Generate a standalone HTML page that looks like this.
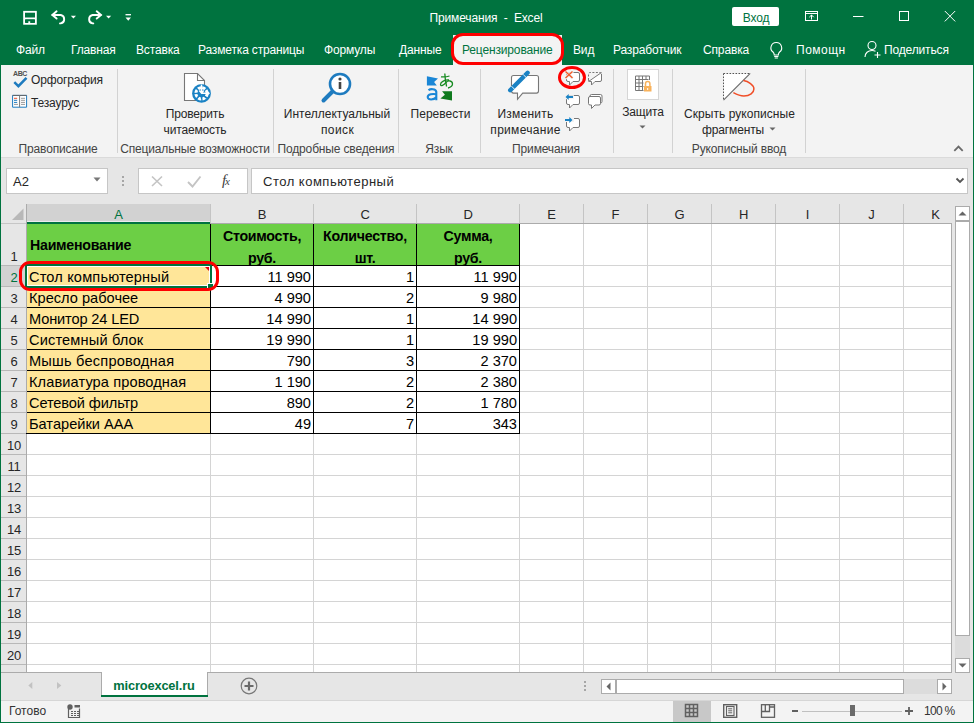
<!DOCTYPE html><html><head><meta charset="utf-8"><style>
html,body{margin:0;padding:0;width:974px;height:723px;overflow:hidden;background:#e6e6e6;}
body{position:relative;font-family:"Liberation Sans",sans-serif;}
.t{position:absolute;white-space:pre;line-height:1;letter-spacing:-0.15px}
</style></head><body>
<div style="position:absolute;left:0px;top:0px;width:974px;height:65px;background:#00733f"></div>
<svg style="position:absolute;left:10px;top:0px" width="130" height="35" viewBox="0 0 130 35"><g fill="none" stroke="#fff" stroke-width="1.8"><rect x="14.1" y="11.8" width="11.8" height="12"/><path d="M15 18.4h10"/></g><rect x="16" y="19.6" width="8" height="3.3" fill="#00733f"/><rect x="18.3" y="21.3" width="1.9" height="2" fill="#fff"/><g fill="none" stroke="#fff" stroke-width="1.9" stroke-linecap="round"><path d="M46.6 11.3L42.3 15l4.3 3.6"/><path d="M42.6 15h8.2a4.3 4.3 0 0 1 0 8.4h-0.8"/></g><path d="M60.8 15.8h5.2l-2.6 2.8z" fill="#fff"/><g fill="none" stroke="#fff" stroke-width="1.9" stroke-linecap="round"><path d="M86.7 11.3L91 15l-4.3 3.6"/><path d="M90.7 15h-8.2a4.3 4.3 0 0 0 0 8.4h0.8"/></g><path d="M96 15.8h5.2l-2.6 2.8z" fill="#fff"/><path d="M115.5 14.7h5.5" stroke="#fff" stroke-width="1.3"/><path d="M115.5 17.5h5.5l-2.75 3.2z" fill="#fff"/></svg>
<div class="t" style="left:286px;width:400px;text-align:center;top:12px;font-size:12px;color:#fff;font-weight:400;">Примечания  -  Excel</div>
<div style="position:absolute;left:732px;top:7px;width:47px;height:19px;background:#fff;border-radius:2px"></div>
<div class="t" style="left:556px;width:400px;text-align:center;top:12px;font-size:12px;color:#00733f;font-weight:400;">Вход</div>
<svg style="position:absolute;left:800px;top:0px" width="174" height="35" viewBox="0 0 174 35"><g fill="none" stroke="#fff" stroke-width="1"><rect x="5.5" y="11.5" width="12" height="9"/><path d="M5.5 13.5h12"/><path d="M11.5 19.5v-4.5M9.3 17.2l2.2-2.2 2.2 2.2"/><path d="M53 16.5h10.5"/><rect x="99.5" y="11.5" width="9" height="9"/><path d="M144.8 11l10.4 10.4M155.2 11l-10.4 10.4"/></g></svg>
<div class="t" style="left:16px;top:44px;font-size:12px;color:#fff;font-weight:400;">Файл</div>
<div class="t" style="left:71px;top:44px;font-size:12px;color:#fff;font-weight:400;">Главная</div>
<div class="t" style="left:136px;top:44px;font-size:12px;color:#fff;font-weight:400;">Вставка</div>
<div class="t" style="left:198px;top:44px;font-size:12px;color:#fff;font-weight:400;">Разметка страницы</div>
<div class="t" style="left:324px;top:44px;font-size:12px;color:#fff;font-weight:400;">Формулы</div>
<div class="t" style="left:399px;top:44px;font-size:12px;color:#fff;font-weight:400;">Данные</div>
<div class="t" style="left:573px;top:44px;font-size:12px;color:#fff;font-weight:400;">Вид</div>
<div class="t" style="left:613px;top:44px;font-size:12px;color:#fff;font-weight:400;">Разработчик</div>
<div class="t" style="left:703px;top:44px;font-size:12px;color:#fff;font-weight:400;">Справка</div>
<div style="position:absolute;left:453px;top:35px;width:109px;height:30px;background:#f3f3f3"></div>
<div class="t" style="left:462px;top:44px;font-size:12px;color:#00733f;font-weight:400;">Рецензирование</div>
<svg style="position:absolute;left:766px;top:38px" width="20" height="22" viewBox="0 0 20 22"><g fill="none" stroke="#fff" stroke-width="1.1"><path d="M10.3 4.5a5.3 5.3 0 0 0-3.3 9.5c.8.8 1.2 1.5 1.2 2.5v0.5h4.2v-0.5c0-1 .4-1.7 1.2-2.5a5.3 5.3 0 0 0-3.3-9.5z"/><path d="M8.2 18.5h4.2M8.7 20h3.2"/></g></svg>
<div class="t" style="left:796px;top:44px;font-size:12px;color:#fff;font-weight:400;letter-spacing:0.5px">Помощн</div>
<svg style="position:absolute;left:862px;top:38px" width="22" height="22" viewBox="0 0 22 22"><g fill="none" stroke="#fff" stroke-width="1.1"><circle cx="10" cy="7.5" r="4"/><path d="M3 19c0-4 3-6.5 7-6.5 1.5 0 2.5.3 3.5.8"/><path d="M15.5 14v6M12.5 17h6"/></g></svg>
<div class="t" style="left:884px;top:44px;font-size:12px;color:#fff;font-weight:400;">Поделиться</div>
<div style="position:absolute;left:451px;top:33px;width:113px;height:32px;border:3px solid #fe0000;border-radius:12px;box-sizing:border-box"></div>
<div style="position:absolute;left:1px;top:65px;width:972px;height:92px;background:#f3f3f3"></div>
<div style="position:absolute;left:1px;top:157px;width:972px;height:1px;background:#dadada"></div>
<div style="position:absolute;left:117px;top:69px;width:1px;height:84px;background:#d2d2d2"></div>
<div style="position:absolute;left:273px;top:69px;width:1px;height:84px;background:#d2d2d2"></div>
<div style="position:absolute;left:398px;top:69px;width:1px;height:84px;background:#d2d2d2"></div>
<div style="position:absolute;left:480px;top:69px;width:1px;height:84px;background:#d2d2d2"></div>
<div style="position:absolute;left:613px;top:69px;width:1px;height:84px;background:#d2d2d2"></div>
<div style="position:absolute;left:672px;top:69px;width:1px;height:84px;background:#d2d2d2"></div>
<div style="position:absolute;left:805px;top:69px;width:1px;height:84px;background:#d2d2d2"></div>
<div class="t" style="left:-142px;width:400px;text-align:center;top:143px;font-size:12px;color:#444;font-weight:400;">Правописание</div>
<div class="t" style="left:-5px;width:400px;text-align:center;top:143px;font-size:12px;color:#444;font-weight:400;">Специальные возможности</div>
<div class="t" style="left:136px;width:400px;text-align:center;top:143px;font-size:12px;color:#444;font-weight:400;">Подробные сведения</div>
<div class="t" style="left:239px;width:400px;text-align:center;top:143px;font-size:12px;color:#444;font-weight:400;">Язык</div>
<div class="t" style="left:346px;width:400px;text-align:center;top:143px;font-size:12px;color:#444;font-weight:400;">Примечания</div>
<div class="t" style="left:539px;width:400px;text-align:center;top:143px;font-size:12px;color:#444;font-weight:400;">Рукописный ввод</div>
<svg style="position:absolute;left:5px;top:66px" width="40" height="45" viewBox="0 0 40 45"><text x="8" y="10.2" font-family="Liberation Sans" font-size="7" font-weight="700" fill="#505050" letter-spacing="-0.4">ABC</text><path d="M9.3 16.2l4.1 4 8.1-8.4" fill="none" stroke="#1e7bbf" stroke-width="2.5"/><path d="M7.6 41.2v-11.8h14v11.8z" fill="#fff" stroke="#1e7bbf" stroke-width="1"/><path d="M7.6 29.4h14" stroke="#666" stroke-width="1"/><path d="M14.6 29.4v11.8" stroke="#777" stroke-width="1"/><path d="M9 32.3h3.2" stroke="#f04e28"/><path d="M9 34.3h3.2M9 36.4h3.2" stroke="#1e7bbf"/><path d="M9 38.4h4M16 32.3h4M16 34.3h4M16 36.4h4M16 38.4h4" stroke="#9a9a9a"/></svg>
<div class="t" style="left:31px;top:74px;font-size:12px;color:#262626;font-weight:400;">Орфография</div>
<div class="t" style="left:31px;top:97px;font-size:12px;color:#262626;font-weight:400;">Тезаурус</div>
<svg style="position:absolute;left:175px;top:66px" width="50" height="40" viewBox="0 0 50 40"><path d="M9.5 7.5h13l7 7v20h-20z" fill="#fff" stroke="#777" stroke-width="1.1"/><path d="M22.5 7.5v7h7" fill="none" stroke="#777" stroke-width="1.1"/><circle cx="26.5" cy="27.4" r="9.4" fill="#1a82c4"/><circle cx="26.5" cy="27.4" r="5.6" fill="none" stroke="#fff" stroke-width="3" stroke-dasharray="3.2 1.2"/><path d="M26.5 27.4L22 23M26.5 27.4L22 32M26.5 27.4L31 32M26.5 27.4v5.8M20.8 27.4h5.7" stroke="#1a82c4" stroke-width="1.2"/><path d="M26.5 18.5v8.5M24.3 24.5l2.2 2.5 2.2-2.5M26.5 27.2h7M31.5 25l2.4 2.2-2.4 2.2" fill="none" stroke="#fff" stroke-width="1.5"/></svg>
<div class="t" style="left:-5px;width:400px;text-align:center;top:108px;font-size:12px;color:#262626;font-weight:400;">Проверить</div>
<div class="t" style="left:-5px;width:400px;text-align:center;top:124px;font-size:12px;color:#262626;font-weight:400;">читаемость</div>
<svg style="position:absolute;left:318px;top:70px" width="36" height="34" viewBox="0 0 36 34"><circle cx="22" cy="14" r="10" fill="#fff" stroke="#1e7bbf" stroke-width="2.6"/><path d="M14.5 21.5l-9 9" stroke="#1e7bbf" stroke-width="4" stroke-linecap="round"/><circle cx="22" cy="9" r="1.6" fill="#444"/><path d="M22 12v7" stroke="#444" stroke-width="2.6"/></svg>
<div class="t" style="left:137px;width:400px;text-align:center;top:108px;font-size:12px;color:#262626;font-weight:400;letter-spacing:0px">Интеллектуальный</div>
<div class="t" style="left:137.5px;width:400px;text-align:center;top:124px;font-size:12px;color:#262626;font-weight:400;letter-spacing:0.4px">поиск</div>
<svg style="position:absolute;left:415px;top:66px" width="50" height="40" viewBox="0 0 50 40"><path d="M11.9 10.2L23 12.4 19.1 16 21.8 19.6H11.9z" fill="#1a86d6"/><path d="M37 25.2V34.6L25.4 32.4 29.9 28.8 27.1 25.2z" fill="#0f7a1e"/><g fill="none" stroke="#168a20" stroke-width="1.3"><path d="M26 10.8c3 0.4 6 0 8.5-0.8"/><path d="M29.8 7.5c0.2 4 0.6 8 1.8 13"/><path d="M34 14c-4-0.5-8.5 2-8.5 4.5 0 2.5 3.5 0.5 5.5-2 2-2.5 6.5-2 6.5 1.5 0 2.5-2.5 3.5-4.5 4"/></g><g fill="none" stroke="#1a86d6" stroke-width="2.1"><path d="M13.5 24.3c1.8-1.6 7.2-1.8 7.8 1.5v8.5"/><path d="M21.3 28.2c-3.5-0.5-8.6-0.2-8.6 2.9 0 3.3 6.2 3 8.6 0.2"/></g></svg>
<div class="t" style="left:240.5px;width:400px;text-align:center;top:108px;font-size:12px;color:#262626;font-weight:400;letter-spacing:0px">Перевести</div>
<svg style="position:absolute;left:495px;top:66px" width="60" height="40" viewBox="0 0 60 40"><path d="M18.5 9.5h23a2 2 0 0 1 2 2v13.6a2 2 0 0 1-2 2h-13.8l-5.2 6.2v-6.2h-4a2 2 0 0 1-2-2v-13.6a2 2 0 0 1 2-2z" fill="#fff" stroke="#777" stroke-width="1.1"/><path d="M15.2 24.2L32.6 6.8" stroke="#1a82c4" stroke-width="4.4" stroke-linecap="round"/><path d="M16.5 20.2l3.4 3.4M28.2 8.5l3.4 3.4" stroke="#fff" stroke-width="0.9"/></svg>
<div class="t" style="left:325.5px;width:400px;text-align:center;top:108px;font-size:12px;color:#262626;font-weight:400;letter-spacing:0.25px">Изменить</div>
<div class="t" style="left:325.5px;width:400px;text-align:center;top:124px;font-size:12px;color:#262626;font-weight:400;letter-spacing:0.3px">примечание</div>
<svg style="position:absolute;left:550px;top:62px" width="70" height="70" viewBox="0 0 70 70"><path d="M18.0 10.5h10a1.5 1.5 0 0 1 1.5 1.5v6a1.5 1.5 0 0 1-1.5 1.5h-5.0l-3.5 3.5v-3.5h-1.5a1.5 1.5 0 0 1-1.5-1.5v-6a1.5 1.5 0 0 1 1.5-1.5z" fill="#fff" stroke="#777" stroke-width="1"/><path d="M15.2 9.2l7.6 7.2M22.8 9.2l-7.6 7.2" stroke="#f3f3f3" stroke-width="3"/><path d="M15.5 9.5l7 6.5M22.5 9.5l-7 6.5" stroke="#f05a28" stroke-width="1.4"/><path d="M51.5 12v6a1.5 1.5 0 0 1-1.5 1.5h-5l-3.5 3.5v-3.5h-1.5a1.5 1.5 0 0 1-1.5-1.5" fill="#fff" stroke="#777"/><path d="M38.5 18v-6a1.5 1.5 0 0 1 1.5-1.5h10a1.5 1.5 0 0 1 1.5 1.5" fill="none" stroke="#777" stroke-dasharray="2 1.5"/><path d="M38.5 19.5L51.5 10.5" stroke="#777"/><path d="M18.0 33.5h10a1.5 1.5 0 0 1 1.5 1.5v6a1.5 1.5 0 0 1-1.5 1.5h-5.0l-3.5 3.5v-3.5h-1.5a1.5 1.5 0 0 1-1.5-1.5v-6a1.5 1.5 0 0 1 1.5-1.5z" fill="#fff" stroke="#777" stroke-width="1"/><path d="M15 35.2h9" stroke="#f3f3f3" stroke-width="4"/><path d="M17 35h6" stroke="#1a82c4" stroke-width="2"/><path d="M15.5 35l3.2-3v6z" fill="#1a82c4"/><path d="M41.5 32.5h9a1.5 1.5 0 0 1 1.5 1.5v5.5a1.5 1.5 0 0 1-1.5 1.5h-4.0l-3.5 3.5v-3.5h-1.5a1.5 1.5 0 0 1-1.5-1.5v-5.5a1.5 1.5 0 0 1 1.5-1.5z" fill="#fff" stroke="#777" stroke-width="1"/><path d="M40.0 34.5h9a1.5 1.5 0 0 1 1.5 1.5v5.5a1.5 1.5 0 0 1-1.5 1.5h-4.0l-3.5 3.5v-3.5h-1.5a1.5 1.5 0 0 1-1.5-1.5v-5.5a1.5 1.5 0 0 1 1.5-1.5z" fill="#fff" stroke="#777" stroke-width="1"/><path d="M18.0 56.5h10a1.5 1.5 0 0 1 1.5 1.5v6a1.5 1.5 0 0 1-1.5 1.5h-5.0l-3.5 3.5v-3.5h-1.5a1.5 1.5 0 0 1-1.5-1.5v-6a1.5 1.5 0 0 1 1.5-1.5z" fill="#fff" stroke="#777" stroke-width="1"/><path d="M14 58h10" stroke="#f3f3f3" stroke-width="4"/><path d="M15 58h5" stroke="#1a82c4" stroke-width="2"/><path d="M22.5 58l-3.2-3v6z" fill="#1a82c4"/></svg>
<div style="position:absolute;left:558px;top:66px;width:28px;height:23px;border:3px solid #fe0000;border-radius:50%;box-sizing:border-box"></div>
<div style="position:absolute;left:627px;top:69px;width:32px;height:31px;background:#fff;border:1px solid #d6d6d6;box-sizing:border-box"></div>
<svg style="position:absolute;left:630px;top:72px" width="26" height="26" viewBox="0 0 26 26"><g stroke="#777" fill="none"><path d="M5.5 18.5v-14.5h14v4"/><path d="M5.5 7.5h13M5.5 11h8M5.5 14.5h8M9 4v15M12.5 4v15M16 4v4"/><path d="M5.5 18.5h8"/></g><rect x="14" y="14" width="7.5" height="5.5" fill="#f8b25c"/><path d="M15.5 14v-2.2a2.2 2.2 0 0 1 4.4 0v2.2" fill="none" stroke="#f8b25c" stroke-width="1.5"/><path d="M17.7 16v2" stroke="#fff" stroke-width="1"/></svg>
<div class="t" style="left:443px;width:400px;text-align:center;top:106px;font-size:12px;color:#262626;font-weight:400;">Защита</div>
<svg style="position:absolute;left:638px;top:123px" width="10" height="8" viewBox="0 0 10 8"><path d="M1.5 2.5h6l-3 3z" fill="#666"/></svg>
<svg style="position:absolute;left:710px;top:62px" width="70" height="45" viewBox="0 0 70 45"><path d="M13.5 11.5h26.5L13.5 38z" fill="#fff"/><path d="M13.5 11.5h26.5" stroke="#555" stroke-dasharray="1.6 1.4"/><path d="M13.5 11.5v26.5" stroke="#555" stroke-dasharray="1.6 1.4"/><path d="M13.5 38.2L40.2 11.3" stroke="#666" stroke-width="1.1"/><path d="M33.4 18.6c5 0.8 10.5 4.5 10.5 8.3 0 3.7-4 7.2-10 7.2-4.2 0-8-2-10.5-3.4" fill="none" stroke="#f04e28" stroke-width="1.5"/></svg>
<div class="t" style="left:539.5px;width:400px;text-align:center;top:108px;font-size:12px;color:#262626;font-weight:400;letter-spacing:0.05px">Скрыть рукописные</div>
<div class="t" style="left:533px;width:400px;text-align:center;top:124px;font-size:12px;color:#262626;font-weight:400;">фрагменты</div>
<svg style="position:absolute;left:769px;top:127px" width="8" height="6" viewBox="0 0 8 6"><path d="M0.5 0.5h6l-3 3z" fill="#666"/></svg>
<svg style="position:absolute;left:950px;top:140px" width="14" height="14" viewBox="0 0 14 14"><path d="M4.3 10.8l4.2-4.2 4.2 4.2" fill="none" stroke="#6a6a6a" stroke-width="1.8"/></svg>
<div style="position:absolute;left:6px;top:168px;width:102px;height:26px;background:#fff;border:1px solid #c6c6c6;box-sizing:border-box"></div>
<div class="t" style="left:13px;top:175px;font-size:13px;color:#262626;font-weight:400;letter-spacing:0.2px">A2</div>
<svg style="position:absolute;left:93px;top:177px" width="10" height="6" viewBox="0 0 10 6"><path d="M0.5 0.5h7l-3.5 4z" fill="#777"/></svg>
<div style="position:absolute;left:122px;top:176px;width:2px;height:2px;background:#a6a6a6"></div>
<div style="position:absolute;left:122px;top:180px;width:2px;height:2px;background:#a6a6a6"></div>
<div style="position:absolute;left:122px;top:184px;width:2px;height:2px;background:#a6a6a6"></div>
<div style="position:absolute;left:138px;top:168px;width:110px;height:26px;background:#fff;border:1px solid #c6c6c6;box-sizing:border-box"></div>
<svg style="position:absolute;left:148px;top:172px" width="18" height="18" viewBox="0 0 18 18"><path d="M4 4.5l10 9.5M14 4.5l-10 9.5" stroke="#c4c4c4" stroke-width="1.6"/></svg>
<svg style="position:absolute;left:184px;top:172px" width="18" height="18" viewBox="0 0 18 18"><path d="M4 10l4.5 4.5 8-10" fill="none" stroke="#c4c4c4" stroke-width="1.9"/></svg>
<div class="t" style="left:222px;top:173px;font-size:15px;color:#404040;font-weight:400;font-family:'Liberation Serif'"><i>f</i><span style='font-size:11px;position:relative;left:-1px'><i>x</i></span></div>
<div style="position:absolute;left:251px;top:168px;width:717px;height:26px;background:#fff;border:1px solid #c6c6c6;box-sizing:border-box"></div>
<div class="t" style="left:263px;top:175px;font-size:13px;color:#262626;font-weight:400;letter-spacing:0.5px">Стол компьютерный</div>
<svg style="position:absolute;left:953px;top:175px" width="14" height="10" viewBox="0 0 14 10"><path d="M3.5 3.5l3.5 3.5 3.5-3.5" fill="none" stroke="#555" stroke-width="1.8"/></svg>
<div style="position:absolute;left:1px;top:204px;width:950px;height:468px;background:#fff"></div>
<div style="position:absolute;left:1px;top:204px;width:950px;height:19px;background:#e6e6e6"></div>
<div style="position:absolute;left:1px;top:223px;width:25px;height:449px;background:#e6e6e6"></div>
<div style="position:absolute;left:27px;top:204px;width:183px;height:19px;background:#d2d2d2"></div>
<div style="position:absolute;left:1px;top:266px;width:25px;height:20px;background:#d2d2d2"></div>
<svg style="position:absolute;left:8px;top:206px" width="18" height="16" viewBox="0 0 18 16"><path d="M15.5 2.5v11.5H4z" fill="#b8b8b8"/></svg>
<div style="position:absolute;left:210px;top:224px;width:1px;height:448px;background:#d4d4d4"></div>
<div style="position:absolute;left:210px;top:204px;width:1px;height:19px;background:#c4c4c4"></div>
<div style="position:absolute;left:313px;top:224px;width:1px;height:448px;background:#d4d4d4"></div>
<div style="position:absolute;left:313px;top:204px;width:1px;height:19px;background:#c4c4c4"></div>
<div style="position:absolute;left:416px;top:224px;width:1px;height:448px;background:#d4d4d4"></div>
<div style="position:absolute;left:416px;top:204px;width:1px;height:19px;background:#c4c4c4"></div>
<div style="position:absolute;left:519px;top:224px;width:1px;height:448px;background:#d4d4d4"></div>
<div style="position:absolute;left:519px;top:204px;width:1px;height:19px;background:#c4c4c4"></div>
<div style="position:absolute;left:583px;top:224px;width:1px;height:448px;background:#d4d4d4"></div>
<div style="position:absolute;left:583px;top:204px;width:1px;height:19px;background:#c4c4c4"></div>
<div style="position:absolute;left:647px;top:224px;width:1px;height:448px;background:#d4d4d4"></div>
<div style="position:absolute;left:647px;top:204px;width:1px;height:19px;background:#c4c4c4"></div>
<div style="position:absolute;left:711px;top:224px;width:1px;height:448px;background:#d4d4d4"></div>
<div style="position:absolute;left:711px;top:204px;width:1px;height:19px;background:#c4c4c4"></div>
<div style="position:absolute;left:775px;top:224px;width:1px;height:448px;background:#d4d4d4"></div>
<div style="position:absolute;left:775px;top:204px;width:1px;height:19px;background:#c4c4c4"></div>
<div style="position:absolute;left:839px;top:224px;width:1px;height:448px;background:#d4d4d4"></div>
<div style="position:absolute;left:839px;top:204px;width:1px;height:19px;background:#c4c4c4"></div>
<div style="position:absolute;left:903px;top:224px;width:1px;height:448px;background:#d4d4d4"></div>
<div style="position:absolute;left:903px;top:204px;width:1px;height:19px;background:#c4c4c4"></div>
<div style="position:absolute;left:26px;top:204px;width:1px;height:468px;background:#ababab"></div>
<div style="position:absolute;left:27px;top:223px;width:924px;height:1px;background:#ababab"></div>
<div style="position:absolute;left:1px;top:223px;width:25px;height:1px;background:#c6c6c6"></div>
<div style="position:absolute;left:27px;top:222px;width:183px;height:2px;background:#00733f"></div>
<div style="position:absolute;left:27px;top:221px;width:183px;height:1px;background:#ececec"></div>
<div style="position:absolute;left:27px;top:265px;width:924px;height:1px;background:#d4d4d4"></div>
<div style="position:absolute;left:1px;top:265px;width:25px;height:1px;background:#b8b8b8"></div>
<div style="position:absolute;left:27px;top:286px;width:924px;height:1px;background:#d4d4d4"></div>
<div style="position:absolute;left:1px;top:286px;width:25px;height:1px;background:#b8b8b8"></div>
<div style="position:absolute;left:27px;top:307px;width:924px;height:1px;background:#d4d4d4"></div>
<div style="position:absolute;left:1px;top:307px;width:25px;height:1px;background:#b8b8b8"></div>
<div style="position:absolute;left:27px;top:328px;width:924px;height:1px;background:#d4d4d4"></div>
<div style="position:absolute;left:1px;top:328px;width:25px;height:1px;background:#b8b8b8"></div>
<div style="position:absolute;left:27px;top:349px;width:924px;height:1px;background:#d4d4d4"></div>
<div style="position:absolute;left:1px;top:349px;width:25px;height:1px;background:#b8b8b8"></div>
<div style="position:absolute;left:27px;top:370px;width:924px;height:1px;background:#d4d4d4"></div>
<div style="position:absolute;left:1px;top:370px;width:25px;height:1px;background:#b8b8b8"></div>
<div style="position:absolute;left:27px;top:391px;width:924px;height:1px;background:#d4d4d4"></div>
<div style="position:absolute;left:1px;top:391px;width:25px;height:1px;background:#b8b8b8"></div>
<div style="position:absolute;left:27px;top:412px;width:924px;height:1px;background:#d4d4d4"></div>
<div style="position:absolute;left:1px;top:412px;width:25px;height:1px;background:#b8b8b8"></div>
<div style="position:absolute;left:27px;top:433px;width:924px;height:1px;background:#d4d4d4"></div>
<div style="position:absolute;left:1px;top:433px;width:25px;height:1px;background:#b8b8b8"></div>
<div style="position:absolute;left:27px;top:454px;width:924px;height:1px;background:#d4d4d4"></div>
<div style="position:absolute;left:1px;top:454px;width:25px;height:1px;background:#b8b8b8"></div>
<div style="position:absolute;left:27px;top:475px;width:924px;height:1px;background:#d4d4d4"></div>
<div style="position:absolute;left:1px;top:475px;width:25px;height:1px;background:#b8b8b8"></div>
<div style="position:absolute;left:27px;top:496px;width:924px;height:1px;background:#d4d4d4"></div>
<div style="position:absolute;left:1px;top:496px;width:25px;height:1px;background:#b8b8b8"></div>
<div style="position:absolute;left:27px;top:517px;width:924px;height:1px;background:#d4d4d4"></div>
<div style="position:absolute;left:1px;top:517px;width:25px;height:1px;background:#b8b8b8"></div>
<div style="position:absolute;left:27px;top:538px;width:924px;height:1px;background:#d4d4d4"></div>
<div style="position:absolute;left:1px;top:538px;width:25px;height:1px;background:#b8b8b8"></div>
<div style="position:absolute;left:27px;top:559px;width:924px;height:1px;background:#d4d4d4"></div>
<div style="position:absolute;left:1px;top:559px;width:25px;height:1px;background:#b8b8b8"></div>
<div style="position:absolute;left:27px;top:580px;width:924px;height:1px;background:#d4d4d4"></div>
<div style="position:absolute;left:1px;top:580px;width:25px;height:1px;background:#b8b8b8"></div>
<div style="position:absolute;left:27px;top:601px;width:924px;height:1px;background:#d4d4d4"></div>
<div style="position:absolute;left:1px;top:601px;width:25px;height:1px;background:#b8b8b8"></div>
<div style="position:absolute;left:27px;top:622px;width:924px;height:1px;background:#d4d4d4"></div>
<div style="position:absolute;left:1px;top:622px;width:25px;height:1px;background:#b8b8b8"></div>
<div style="position:absolute;left:27px;top:643px;width:924px;height:1px;background:#d4d4d4"></div>
<div style="position:absolute;left:1px;top:643px;width:25px;height:1px;background:#b8b8b8"></div>
<div style="position:absolute;left:27px;top:664px;width:924px;height:1px;background:#d4d4d4"></div>
<div style="position:absolute;left:1px;top:664px;width:25px;height:1px;background:#b8b8b8"></div>
<div class="t" style="left:-81.5px;width:400px;text-align:center;top:208px;font-size:13px;color:#00733f;font-weight:400;">A</div>
<div class="t" style="left:62.0px;width:400px;text-align:center;top:208px;font-size:13px;color:#262626;font-weight:400;">B</div>
<div class="t" style="left:165.0px;width:400px;text-align:center;top:208px;font-size:13px;color:#262626;font-weight:400;">C</div>
<div class="t" style="left:268.0px;width:400px;text-align:center;top:208px;font-size:13px;color:#262626;font-weight:400;">D</div>
<div class="t" style="left:351.5px;width:400px;text-align:center;top:208px;font-size:13px;color:#262626;font-weight:400;">E</div>
<div class="t" style="left:415.5px;width:400px;text-align:center;top:208px;font-size:13px;color:#262626;font-weight:400;">F</div>
<div class="t" style="left:479.5px;width:400px;text-align:center;top:208px;font-size:13px;color:#262626;font-weight:400;">G</div>
<div class="t" style="left:543.5px;width:400px;text-align:center;top:208px;font-size:13px;color:#262626;font-weight:400;">H</div>
<div class="t" style="left:607.5px;width:400px;text-align:center;top:208px;font-size:13px;color:#262626;font-weight:400;">I</div>
<div class="t" style="left:671.5px;width:400px;text-align:center;top:208px;font-size:13px;color:#262626;font-weight:400;">J</div>
<div class="t" style="left:735.5px;width:400px;text-align:center;top:208px;font-size:13px;color:#262626;font-weight:400;">K</div>
<div class="t" style="left:-186px;width:400px;text-align:center;top:250px;font-size:13px;color:#262626;font-weight:400;">1</div>
<div class="t" style="left:-186px;width:400px;text-align:center;top:271px;font-size:13px;color:#00733f;font-weight:400;">2</div>
<div class="t" style="left:-186px;width:400px;text-align:center;top:292px;font-size:13px;color:#262626;font-weight:400;">3</div>
<div class="t" style="left:-186px;width:400px;text-align:center;top:313px;font-size:13px;color:#262626;font-weight:400;">4</div>
<div class="t" style="left:-186px;width:400px;text-align:center;top:334px;font-size:13px;color:#262626;font-weight:400;">5</div>
<div class="t" style="left:-186px;width:400px;text-align:center;top:355px;font-size:13px;color:#262626;font-weight:400;">6</div>
<div class="t" style="left:-186px;width:400px;text-align:center;top:376px;font-size:13px;color:#262626;font-weight:400;">7</div>
<div class="t" style="left:-186px;width:400px;text-align:center;top:397px;font-size:13px;color:#262626;font-weight:400;">8</div>
<div class="t" style="left:-186px;width:400px;text-align:center;top:418px;font-size:13px;color:#262626;font-weight:400;">9</div>
<div class="t" style="left:-186px;width:400px;text-align:center;top:439px;font-size:13px;color:#262626;font-weight:400;">10</div>
<div class="t" style="left:-186px;width:400px;text-align:center;top:460px;font-size:13px;color:#262626;font-weight:400;">11</div>
<div class="t" style="left:-186px;width:400px;text-align:center;top:481px;font-size:13px;color:#262626;font-weight:400;">12</div>
<div class="t" style="left:-186px;width:400px;text-align:center;top:502px;font-size:13px;color:#262626;font-weight:400;">13</div>
<div class="t" style="left:-186px;width:400px;text-align:center;top:523px;font-size:13px;color:#262626;font-weight:400;">14</div>
<div class="t" style="left:-186px;width:400px;text-align:center;top:544px;font-size:13px;color:#262626;font-weight:400;">15</div>
<div class="t" style="left:-186px;width:400px;text-align:center;top:565px;font-size:13px;color:#262626;font-weight:400;">16</div>
<div class="t" style="left:-186px;width:400px;text-align:center;top:586px;font-size:13px;color:#262626;font-weight:400;">17</div>
<div class="t" style="left:-186px;width:400px;text-align:center;top:607px;font-size:13px;color:#262626;font-weight:400;">18</div>
<div class="t" style="left:-186px;width:400px;text-align:center;top:628px;font-size:13px;color:#262626;font-weight:400;">19</div>
<div class="t" style="left:-186px;width:400px;text-align:center;top:649px;font-size:13px;color:#262626;font-weight:400;">20</div>
<div style="position:absolute;left:951px;top:223px;width:1px;height:450px;background:#ababab"></div>
<div style="position:absolute;left:1px;top:672px;width:951px;height:1px;background:#ababab"></div>
<div style="position:absolute;left:27px;top:224px;width:183px;height:41px;background:#6ccf45"></div>
<div style="position:absolute;left:211px;top:224px;width:102px;height:41px;background:#6ccf45"></div>
<div style="position:absolute;left:314px;top:224px;width:102px;height:41px;background:#6ccf45"></div>
<div style="position:absolute;left:417px;top:224px;width:102px;height:41px;background:#6ccf45"></div>
<div style="position:absolute;left:27px;top:266px;width:183px;height:20px;background:#ffe699"></div>
<div style="position:absolute;left:27px;top:287px;width:183px;height:20px;background:#ffe699"></div>
<div style="position:absolute;left:27px;top:308px;width:183px;height:20px;background:#ffe699"></div>
<div style="position:absolute;left:27px;top:329px;width:183px;height:20px;background:#ffe699"></div>
<div style="position:absolute;left:27px;top:350px;width:183px;height:20px;background:#ffe699"></div>
<div style="position:absolute;left:27px;top:371px;width:183px;height:20px;background:#ffe699"></div>
<div style="position:absolute;left:27px;top:392px;width:183px;height:20px;background:#ffe699"></div>
<div style="position:absolute;left:27px;top:413px;width:183px;height:20px;background:#ffe699"></div>
<div style="position:absolute;left:210px;top:224px;width:1px;height:210px;background:#000"></div>
<div style="position:absolute;left:313px;top:224px;width:1px;height:210px;background:#000"></div>
<div style="position:absolute;left:416px;top:224px;width:1px;height:210px;background:#000"></div>
<div style="position:absolute;left:519px;top:224px;width:1px;height:210px;background:#000"></div>
<div style="position:absolute;left:27px;top:265px;width:493px;height:1px;background:#000"></div>
<div style="position:absolute;left:27px;top:286px;width:493px;height:1px;background:#000"></div>
<div style="position:absolute;left:27px;top:307px;width:493px;height:1px;background:#000"></div>
<div style="position:absolute;left:27px;top:328px;width:493px;height:1px;background:#000"></div>
<div style="position:absolute;left:27px;top:349px;width:493px;height:1px;background:#000"></div>
<div style="position:absolute;left:27px;top:370px;width:493px;height:1px;background:#000"></div>
<div style="position:absolute;left:27px;top:391px;width:493px;height:1px;background:#000"></div>
<div style="position:absolute;left:27px;top:412px;width:493px;height:1px;background:#000"></div>
<div style="position:absolute;left:27px;top:433px;width:493px;height:1px;background:#000"></div>
<div style="position:absolute;left:26px;top:433px;width:185px;height:1px;background:#000"></div>
<div class="t" style="left:30px;top:238px;font-size:14.2px;color:#000;font-weight:700;letter-spacing:-0.25px">Наименование</div>
<div class="t" style="left:62px;width:400px;text-align:center;top:229px;font-size:14.2px;color:#000;font-weight:700;letter-spacing:-0.25px">Стоимость,</div>
<div class="t" style="left:62px;width:400px;text-align:center;top:251px;font-size:14.2px;color:#000;font-weight:700;letter-spacing:-0.25px">руб.</div>
<div class="t" style="left:165px;width:400px;text-align:center;top:229px;font-size:14.2px;color:#000;font-weight:700;letter-spacing:-0.25px">Количество,</div>
<div class="t" style="left:165px;width:400px;text-align:center;top:251px;font-size:14.2px;color:#000;font-weight:700;letter-spacing:-0.25px">шт.</div>
<div class="t" style="left:268px;width:400px;text-align:center;top:229px;font-size:14.2px;color:#000;font-weight:700;letter-spacing:-0.25px">Сумма,</div>
<div class="t" style="left:268px;width:400px;text-align:center;top:251px;font-size:14.2px;color:#000;font-weight:700;letter-spacing:-0.25px">руб.</div>
<div class="t" style="left:29px;top:270px;font-size:14.6px;color:#000;font-weight:400;letter-spacing:0.15px">Стол компьютерный</div>
<div class="t" style="left:-89px;width:400px;text-align:right;top:270px;font-size:14.6px;color:#000;font-weight:400;letter-spacing:0px">11 990</div>
<div class="t" style="left:14px;width:400px;text-align:right;top:270px;font-size:14.6px;color:#000;font-weight:400;letter-spacing:0px">1</div>
<div class="t" style="left:117px;width:400px;text-align:right;top:270px;font-size:14.6px;color:#000;font-weight:400;letter-spacing:0px">11 990</div>
<div class="t" style="left:29px;top:291px;font-size:14.6px;color:#000;font-weight:400;letter-spacing:0.01px">Кресло рабочее</div>
<div class="t" style="left:-89px;width:400px;text-align:right;top:291px;font-size:14.6px;color:#000;font-weight:400;letter-spacing:0px">4 990</div>
<div class="t" style="left:14px;width:400px;text-align:right;top:291px;font-size:14.6px;color:#000;font-weight:400;letter-spacing:0px">2</div>
<div class="t" style="left:117px;width:400px;text-align:right;top:291px;font-size:14.6px;color:#000;font-weight:400;letter-spacing:0px">9 980</div>
<div class="t" style="left:29px;top:312px;font-size:14.6px;color:#000;font-weight:400;letter-spacing:-0.14px">Монитор 24 LED</div>
<div class="t" style="left:-89px;width:400px;text-align:right;top:312px;font-size:14.6px;color:#000;font-weight:400;letter-spacing:0px">14 990</div>
<div class="t" style="left:14px;width:400px;text-align:right;top:312px;font-size:14.6px;color:#000;font-weight:400;letter-spacing:0px">1</div>
<div class="t" style="left:117px;width:400px;text-align:right;top:312px;font-size:14.6px;color:#000;font-weight:400;letter-spacing:0px">14 990</div>
<div class="t" style="left:29px;top:333px;font-size:14.6px;color:#000;font-weight:400;letter-spacing:0.15px">Системный блок</div>
<div class="t" style="left:-89px;width:400px;text-align:right;top:333px;font-size:14.6px;color:#000;font-weight:400;letter-spacing:0px">19 990</div>
<div class="t" style="left:14px;width:400px;text-align:right;top:333px;font-size:14.6px;color:#000;font-weight:400;letter-spacing:0px">1</div>
<div class="t" style="left:117px;width:400px;text-align:right;top:333px;font-size:14.6px;color:#000;font-weight:400;letter-spacing:0px">19 990</div>
<div class="t" style="left:29px;top:354px;font-size:14.6px;color:#000;font-weight:400;letter-spacing:0.21px">Мышь беспроводная</div>
<div class="t" style="left:-89px;width:400px;text-align:right;top:354px;font-size:14.6px;color:#000;font-weight:400;letter-spacing:0px">790</div>
<div class="t" style="left:14px;width:400px;text-align:right;top:354px;font-size:14.6px;color:#000;font-weight:400;letter-spacing:0px">3</div>
<div class="t" style="left:117px;width:400px;text-align:right;top:354px;font-size:14.6px;color:#000;font-weight:400;letter-spacing:0px">2 370</div>
<div class="t" style="left:29px;top:375px;font-size:14.6px;color:#000;font-weight:400;letter-spacing:0.1px">Клавиатура проводная</div>
<div class="t" style="left:-89px;width:400px;text-align:right;top:375px;font-size:14.6px;color:#000;font-weight:400;letter-spacing:0px">1 190</div>
<div class="t" style="left:14px;width:400px;text-align:right;top:375px;font-size:14.6px;color:#000;font-weight:400;letter-spacing:0px">2</div>
<div class="t" style="left:117px;width:400px;text-align:right;top:375px;font-size:14.6px;color:#000;font-weight:400;letter-spacing:0px">2 380</div>
<div class="t" style="left:29px;top:396px;font-size:14.6px;color:#000;font-weight:400;letter-spacing:-0.11px">Сетевой фильтр</div>
<div class="t" style="left:-89px;width:400px;text-align:right;top:396px;font-size:14.6px;color:#000;font-weight:400;letter-spacing:0px">890</div>
<div class="t" style="left:14px;width:400px;text-align:right;top:396px;font-size:14.6px;color:#000;font-weight:400;letter-spacing:0px">2</div>
<div class="t" style="left:117px;width:400px;text-align:right;top:396px;font-size:14.6px;color:#000;font-weight:400;letter-spacing:0px">1 780</div>
<div class="t" style="left:29px;top:417px;font-size:14.6px;color:#000;font-weight:400;letter-spacing:0.0px">Батарейки AAA</div>
<div class="t" style="left:-89px;width:400px;text-align:right;top:417px;font-size:14.6px;color:#000;font-weight:400;letter-spacing:0px">49</div>
<div class="t" style="left:14px;width:400px;text-align:right;top:417px;font-size:14.6px;color:#000;font-weight:400;letter-spacing:0px">7</div>
<div class="t" style="left:117px;width:400px;text-align:right;top:417px;font-size:14.6px;color:#000;font-weight:400;letter-spacing:0px">343</div>
<svg style="position:absolute;left:204px;top:266px" width="6" height="6" viewBox="0 0 6 6"><path d="M0 0h6v6z" fill="#e3000f"/></svg>
<div style="position:absolute;left:25px;top:264px;width:187px;height:24px;border:2px solid #00733f;box-sizing:border-box"></div>
<div style="position:absolute;left:27px;top:266px;width:183px;height:20px;border:1px solid #fff;box-sizing:border-box"></div>
<div style="position:absolute;left:207px;top:283px;width:7px;height:7px;background:#fff"></div>
<div style="position:absolute;left:208px;top:284px;width:5px;height:5px;background:#00733f"></div>
<div style="position:absolute;left:19px;top:261px;width:200px;height:30px;border:3px solid #fe0000;border-radius:11px;box-sizing:border-box"></div>
<div style="position:absolute;left:952px;top:204px;width:21px;height:469px;background:#e6e6e6"></div>
<div style="position:absolute;left:955px;top:206px;width:15px;height:466px;background:#dcdcdc"></div>
<div style="position:absolute;left:955px;top:206px;width:15px;height:15px;background:#fff;border:1px solid #ababab;box-sizing:border-box"></div>
<svg style="position:absolute;left:955px;top:206px" width="15" height="15" viewBox="0 0 15 15"><path d="M3.5 9.5h8l-4-4z" fill="#666"/></svg>
<div style="position:absolute;left:955px;top:221px;width:15px;height:415px;background:#fff;border:1px solid #ababab;box-sizing:border-box"></div>
<div style="position:absolute;left:955px;top:658px;width:15px;height:15px;background:#fff;border:1px solid #ababab;box-sizing:border-box"></div>
<svg style="position:absolute;left:955px;top:658px" width="15" height="15" viewBox="0 0 15 15"><path d="M3.5 5.5h8l-4 4z" fill="#666"/></svg>
<div style="position:absolute;left:1px;top:673px;width:972px;height:27px;background:#e6e6e6"></div>
<svg style="position:absolute;left:24px;top:678px" width="12" height="14" viewBox="0 0 12 14"><path d="M8.3 4v7l-4-3.5z" fill="#c2c2c2"/></svg>
<svg style="position:absolute;left:52px;top:678px" width="12" height="14" viewBox="0 0 12 14"><path d="M5 4v7l4.3-3.5z" fill="#c2c2c2"/></svg>
<div style="position:absolute;left:101px;top:672px;width:107px;height:25px;background:#fff;border-left:1px solid #ababab;border-right:1px solid #ababab;box-sizing:border-box"></div>
<div style="position:absolute;left:101px;top:695px;width:107px;height:2px;background:#00733f"></div>
<div class="t" style="left:-46px;width:400px;text-align:center;top:680px;font-size:12.8px;color:#00733f;font-weight:700;">microexcel.ru</div>
<svg style="position:absolute;left:240px;top:677px" width="18" height="18" viewBox="0 0 18 18"><circle cx="9" cy="9" r="7.8" fill="none" stroke="#777" stroke-width="1.2"/><path d="M9 4.5v9M4.5 9h9" stroke="#6a6a6a" stroke-width="2.2"/></svg>
<div style="position:absolute;left:584px;top:681px;width:2px;height:2px;background:#a6a6a6"></div>
<div style="position:absolute;left:584px;top:685px;width:2px;height:2px;background:#a6a6a6"></div>
<div style="position:absolute;left:584px;top:689px;width:2px;height:2px;background:#a6a6a6"></div>
<div style="position:absolute;left:601px;top:679px;width:351px;height:15px;background:#dcdcdc"></div>
<div style="position:absolute;left:601px;top:679px;width:15px;height:15px;background:#fff;border:1px solid #ababab;box-sizing:border-box"></div>
<svg style="position:absolute;left:601px;top:679px" width="15" height="15" viewBox="0 0 15 15"><path d="M9.5 3.5v8l-4-4z" fill="#666"/></svg>
<div style="position:absolute;left:616px;top:679px;width:288px;height:15px;background:#fff;border:1px solid #ababab;box-sizing:border-box"></div>
<div style="position:absolute;left:937px;top:679px;width:15px;height:15px;background:#fff;border:1px solid #ababab;box-sizing:border-box"></div>
<svg style="position:absolute;left:937px;top:679px" width="15" height="15" viewBox="0 0 15 15"><path d="M5.5 3.5v8l4-4z" fill="#666"/></svg>
<div style="position:absolute;left:1px;top:700px;width:972px;height:1px;background:#d6d6d6"></div>
<div style="position:absolute;left:1px;top:701px;width:972px;height:21px;background:#f3f3f3"></div>
<div class="t" style="left:9px;top:705px;font-size:12px;color:#333;font-weight:400;letter-spacing:0px">Готово</div>
<svg style="position:absolute;left:64px;top:702px" width="20" height="18" viewBox="0 0 20 18"><circle cx="6" cy="5" r="2.7" fill="#606060"/><rect x="10.5" y="3" width="5.5" height="2.5" fill="#606060"/><path d="M4.5 7v8.5h11v-9" fill="none" stroke="#606060" stroke-width="1.2"/><path d="M7 9.5h8M7 11.5h8M7 13.5h8" stroke="#606060" stroke-width="1" stroke-dasharray="2 1"/></svg>
<div style="position:absolute;left:673px;top:701px;width:38px;height:21px;background:#c8c8c8"></div>
<svg style="position:absolute;left:682px;top:701px" width="20" height="20" viewBox="0 0 20 20"><g fill="none" stroke="#606060" stroke-width="1.5"><rect x="3.5" y="3.5" width="12" height="12"/><path d="M3.5 7.5h12M3.5 11.5h12M7.5 3.5v12M11.5 3.5v12"/></g></svg>
<svg style="position:absolute;left:720px;top:701px" width="20" height="20" viewBox="0 0 20 20"><g fill="none" stroke="#606060"><rect x="3.7" y="3.7" width="13" height="12.6" stroke-width="1.4"/><rect x="6.5" y="5.5" width="7.5" height="9" stroke-width="1.1"/><path d="M8.2 7.8h4M8.2 9.8h4M8.2 11.8h4" stroke-width="1"/></g></svg>
<svg style="position:absolute;left:757px;top:701px" width="20" height="20" viewBox="0 0 20 20"><g fill="none" stroke="#606060" stroke-width="1.3"><rect x="4.5" y="3.7" width="13" height="12.6"/><path d="M4.5 10.5h8v-6.8M8.3 3.7v6.8M12.5 6h5"/></g></svg>
<div style="position:absolute;left:792px;top:710px;width:6px;height:2px;background:#606060"></div>
<div style="position:absolute;left:802px;top:711px;width:100px;height:1px;background:#c0c0c0"></div>
<div style="position:absolute;left:850px;top:705px;width:5px;height:11px;background:#6a6a6a"></div>
<svg style="position:absolute;left:904px;top:706px" width="10" height="10" viewBox="0 0 10 10"><path d="M5 1v8M1 5h8" stroke="#606060" stroke-width="1.8"/></svg>
<div class="t" style="left:924px;top:705px;font-size:12px;color:#333;font-weight:400;letter-spacing:-0.7px">100 %</div>
<div style="position:absolute;left:0px;top:0px;width:1px;height:723px;background:#00733f"></div>
<div style="position:absolute;left:973px;top:0px;width:1px;height:723px;background:#00733f"></div>
<div style="position:absolute;left:0px;top:722px;width:974px;height:1px;background:#00733f"></div>
</body></html>
